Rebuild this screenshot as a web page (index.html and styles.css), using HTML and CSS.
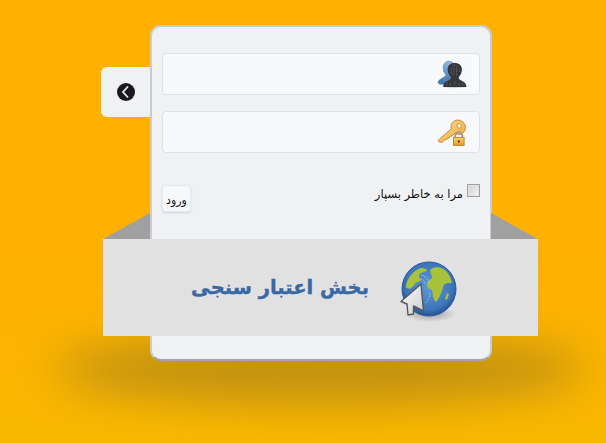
FILE: index.html
```html
<!DOCTYPE html>
<html lang="fa" dir="rtl">
<head>
<meta charset="utf-8">
<title>بخش اعتبار سنجی</title>
<link rel="stylesheet" href="styles.css">
</head>
<body>
<main class="stage">
  <div class="shadow"></div>
  <button type="button" class="tab" aria-label="بازگشت">
    <svg width="20" height="20" viewBox="0 0 20 20"><circle cx="10" cy="10" r="9" fill="#1b1820"/><path d="M12 4.500L7 10l5 5.500" fill="none" stroke="#ececec" stroke-width="1.800"/></svg>
  </button>
  <form class="card">
    <div class="field">
      <svg class="field-icon" width="32" height="29" viewBox="0 0 36 32">
        <defs>
          <linearGradient id="ub" x1="0" y1="0" x2="0" y2="1"><stop offset="0" stop-color="#8fb8e0"/><stop offset="1" stop-color="#3f6fa8"/></linearGradient>
          <radialGradient id="sh"><stop offset="0" stop-color="#000" stop-opacity=".3"/><stop offset="1" stop-color="#000" stop-opacity="0"/></radialGradient>
        </defs>
        <ellipse cx="20" cy="29.500" rx="16" ry="2.500" fill="url(#sh)"/>
        <path d="M1 25c1-4 6-5 8-7 1-1 1-2 0-3-2-2-2-5-2-7 0-4 3-7 6-7 4 0 7 3 7 7v10l-8 9H3z" fill="url(#ub)" stroke="#4a78ad" stroke-width=".6"/>
        <path d="M7 30c0-5 4-6 7-8 2-1 2-2 1-4-2-2-3-5-3-8 0-5 4-7 8-7 5 0 8 3 8 7 0 3-1 6-3 8-1 2-1 3 1 4 3 2 7 3 7 8z" fill="#35363a"/>
        <path d="M17 6c2-1 5-1 6 1M16 9v7M19 8v10M22 8v9M25 10v4M11 25v3M15 25v3M20 24v4M25 25v3M29 25v3" stroke="#85878b" stroke-width=".8" fill="none" stroke-dasharray="1 1"/>
      </svg>
    </div>
    <div class="field">
      <svg class="field-icon" width="32" height="29" viewBox="0 0 36 32">
        <defs>
          <linearGradient id="kb" x1="0" y1="0" x2="1" y2="1"><stop offset="0" stop-color="#fde3a0"/><stop offset="1" stop-color="#eda32e"/></linearGradient>
          <linearGradient id="lk" x1="0" y1="0" x2="0" y2="1"><stop offset="0" stop-color="#fbd675"/><stop offset="1" stop-color="#e79a22"/></linearGradient>
        </defs>
        <path d="M1 25l15-13c-1-5 2-10 7-10 5 0 9 4 9 8 0 5-4 9-9 8-1 0-2 0-3-1l-3 3-2 0-1 2-2 0-1 2-2 0-3 3H3z" fill="url(#kb)" stroke="#c07f20" stroke-width="1"/>
        <circle cx="25" cy="8.500" r="2.600" fill="#fff3d3" stroke="#c07f20" stroke-width=".8"/>
        <path d="M20.500 22v-2.500a4 4 0 0 1 8 0V22" fill="none" stroke="#9a9a9a" stroke-width="2"/>
        <rect x="18.500" y="21.500" width="12" height="9" fill="url(#lk)" stroke="#b97a1c"/>
        <rect x="23.500" y="24.500" width="2" height="3" fill="#6b4510"/>
      </svg>
    </div>
    <div class="options">
      <label class="remember"><input type="checkbox" class="check"><span class="remember-text">مرا به خاطر بسپار</span></label>
      <button type="button" class="submit">ورود</button>
    </div>
  </form>
  <svg class="fold fold-left" width="47" height="26" viewBox="0 0 47 26"><path d="M47 0v26H0z" fill="#a0a0a0"/></svg>
  <svg class="fold fold-right" width="47" height="26" viewBox="0 0 47 26"><path d="M0 0v26h47z" fill="#a0a0a0"/></svg>
  <header class="ribbon">
    <svg class="globe" width="66" height="66" viewBox="0 0 66 66">
      <defs>
        <radialGradient id="gb" cx=".5" cy=".45" r=".55"><stop offset="0" stop-color="#5f9ad8"/><stop offset=".8" stop-color="#3b74b8"/><stop offset="1" stop-color="#25518f"/></radialGradient>
        <radialGradient id="gs"><stop offset="0" stop-color="#000" stop-opacity=".3"/><stop offset="1" stop-color="#000" stop-opacity="0"/></radialGradient>
        <linearGradient id="cur" x1="0" y1="0" x2="1" y2="1"><stop offset="0" stop-color="#ffffff"/><stop offset="1" stop-color="#c9cbce"/></linearGradient>
      </defs>
      <ellipse cx="38" cy="54" rx="26" ry="8" fill="url(#gs)"/>
      <circle cx="37" cy="29" r="27" fill="url(#gb)" stroke="#2b5a9c" stroke-width="1"/>
      <path d="M14 26c1-8 8-16 15-18 3 0 6 1 6 3-3 1-8 2-8 5 0 2 2 2 2 4s-5 1-6 4c-1 2-3 3-5 5-2-1-4 0-4-3z" fill="#a9c23c"/>
      <path d="M39 9c5-3 11-2 15 2 4 4 5 8 6 12-3 0-6 0-7 1-2 1-2 4-3 7-2 4-3 8-6 11-3-2-3-7-4-12-2-1-5-2-5-5 0-3 2-5 4-6 2-1 1-3 0-5-1-2-1-4 0-5z" fill="#a9c23c"/>
      <path d="M55 33l2 1-2 6-2-1z" fill="#a9c23c"/>
      <path d="M29 15a10 10 0 0 1 8 9M29 19a6 6 0 0 1 4 5M38 33a12 12 0 0 1-5 10" fill="none" stroke="#bcd6f0" stroke-width="1" stroke-dasharray="1.500 1" opacity=".8"/>
      <path d="M29 24L9 41.500l6 2.500 1 11 5.500-1 0-8 10 5z" fill="url(#cur)" stroke="#55585c" stroke-width="1.400" stroke-linejoin="round"/>
    </svg>
    <h1 class="title">بخش اعتبار سنجی</h1>
  </header>
</main>
</body>
</html>
```
FILE: styles.css
```css
* { box-sizing: border-box; }
html, body { margin: 0; height: 100%; }
body {
  background: linear-gradient(#ffb000, #ffb000 55%, #f9b800);
  overflow: hidden;
  font-family: "DejaVu Sans", "Liberation Sans", sans-serif;
}
.stage {
  position: relative;
  width: 606px;
  height: 443px;
  padding-top: 25px;
}
.shadow {
  position: absolute;
  left: 56px;
  top: 334px;
  width: 530px;
  height: 70px;
  border-radius: 50%;
  background: rgba(150,120,30,.58);
  filter: blur(22px);
}
.card {
  position: relative;
  width: 342px;
  height: 336px;
  margin-right: 114px;
  padding: 26px 10px 0;
  background: #f0f1f3;
  border: 2px solid #c9ccd2;
  border-bottom-color: #a3a5a8;
  border-radius: 11px;
  display: flex;
  flex-direction: column;
  gap: 16px;
}
.field {
  height: 42px;
  background: #f8f9fd;
  border: 1px solid #dfe1e6;
  border-radius: 4px;
  display: flex;
  align-items: center;
  padding-right: 10px;
}
.field-icon { display: block; }
.options {
  display: flex;
  justify-content: space-between;
  align-items: flex-start;
  margin-top: 15px;
}
.remember {
  display: flex;
  align-items: flex-start;
  gap: 4px;
  font-size: 11.500px;
  color: #111;
  line-height: 15px;
}
.remember-text { padding-top: 3px; }
.check {
  appearance: none;
  width: 13px;
  height: 13px;
  margin: 0;
  border: 1px solid #a0a0a0;
  background: linear-gradient(135deg, #cfcfcf, #f4f4f4);
  box-shadow: inset 0 0 0 1px #e4e4e4;
}
.submit {
  width: 29px;
  height: 27px;
  margin: 1px 0 0;
  padding: 3px 0 0;
  font: 11px "DejaVu Sans", sans-serif;
  color: #111;
  background: #f7f8fa;
  border: 1px solid #e8e9ec;
  border-radius: 3px;
  box-shadow: 0 1px 2px rgba(0,0,0,.12);
}
.tab {
  position: absolute;
  left: 101px;
  top: 67px;
  width: 50px;
  height: 50px;
  padding: 0;
  background: #f0f1f3;
  border: 0;
  border-radius: 6px 0 0 6px;
  display: flex;
  align-items: center;
  justify-content: center;
}
.fold { position: absolute; top: 213px; }
.fold-left { left: 103px; }
.fold-right { left: 491px; }
.ribbon {
  position: absolute;
  left: 103px;
  top: 239px;
  width: 435px;
  height: 97px;
  background: #e1e1e1;
  display: flex;
  align-items: center;
  padding-right: 80px;
}
.globe { display: block; flex: none; margin-top: 10px; }
.title {
  margin: 0 23px 0 0;
  font: bold 19.500px "DejaVu Sans", sans-serif;
  color: #3a68a4;
  -webkit-text-stroke: .4px #3a68a4;
  white-space: nowrap;
}
```
